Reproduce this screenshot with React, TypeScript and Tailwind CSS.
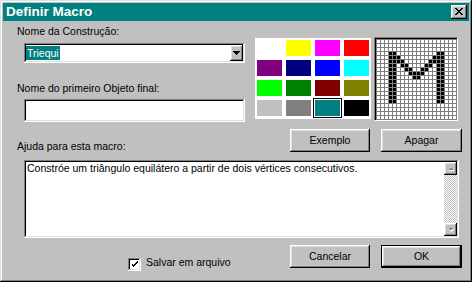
import React from "react";

const raised =
  "shadow-[inset_-1px_-1px_#000,inset_1px_1px_#fff,inset_-2px_-2px_#808080,inset_2px_2px_#dfdfdf]";
const sunken =
  "shadow-[inset_-1px_-1px_#fff,inset_1px_1px_#808080,inset_-2px_-2px_#dfdfdf,inset_2px_2px_#000]";

const palette = [
  "bg-white", "bg-[#ffff00]", "bg-[#ff00ff]", "bg-[#ff0000]",
  "bg-[#800080]", "bg-[#000080]", "bg-[#0000ff]", "bg-[#00ffff]",
  "bg-[#00ff00]", "bg-[#008000]", "bg-[#800000]", "bg-[#808000]",
  "bg-[#c0c0c0]", "bg-[#808080]", "bg-[#008080]", "bg-black",
];

// 20x20 bitmap of the macro icon
const glyph: number[][] = [
  [], [], [],
  [3, 4, 15, 16],
  [3, 4, 5, 14, 15, 16],
  [3, 4, 5, 6, 13, 14, 15, 16],
  [3, 4, 6, 7, 12, 13, 15, 16],
  [3, 4, 7, 8, 11, 12, 15, 16],
  [3, 4, 8, 9, 10, 11, 15, 16],
  [3, 4, 9, 10, 15, 16],
  [3, 4, 15, 16], [3, 4, 15, 16], [3, 4, 15, 16],
  [3, 4, 15, 16], [3, 4, 15, 16], [3, 4, 15, 16],
  [], [], [], [],
];

const closeX = [
  "XX....XX",
  ".XX..XX.",
  "..XXXX..",
  "...XX...",
  "..XXXX..",
  ".XX..XX.",
  "XX....XX",
];

function CloseButton() {
  return (
    <div className={`w-[16px] h-[14px] bg-[#c0c0c0] flex items-center justify-center ${raised}`}>
      <svg width="8" height="7" viewBox="0 0 8 7" shapeRendering="crispEdges" className="-mt-px -ml-px">
        {closeX.map((row, y) =>
          row.split("").map((c, x) =>
            c === "X" ? <rect key={`${x}-${y}`} x={x} y={y} width="1" height="1" fill="#000" /> : null
          )
        )}
      </svg>
    </div>
  );
}

function Button({ label, w, isDefault }: { label: string; w: string; isDefault?: boolean }) {
  if (isDefault) {
    return (
      <div className={`${w} h-[23px] border border-black`}>
        <div className={`w-full h-full flex items-center justify-center ${raised}`}>{label}</div>
      </div>
    );
  }
  return <div className={`${w} h-[23px] flex items-center justify-center ${raised}`}>{label}</div>;
}

function ScrollArrow({ up }: { up?: boolean }) {
  return (
    <div className={`w-[13px] h-[13px] bg-[#c0c0c0] flex items-center justify-center ${raised}`}>
      <svg width="6" height="4" viewBox="0 0 6 4" shapeRendering="crispEdges">
        {up ? (
          <>
            <polygon points="1,4 6,4 3.5,1" fill="#fff" />
            <polygon points="0,3 5,3 2.5,0.5" fill="#808080" />
          </>
        ) : (
          <>
            <polygon points="1,1 6,1 3.5,4" fill="#fff" />
            <polygon points="0,0 5,0 2.5,2.5" fill="#808080" />
          </>
        )}
      </svg>
    </div>
  );
}

export default function App() {
  return (
    <div
      className={`w-[472px] h-[282px] bg-[#c0c0c0] p-[3px] flex flex-col text-black text-[10.5px] leading-[13px] font-['Liberation_Sans',Arial,sans-serif] shadow-[inset_-1px_-1px_#000,inset_1px_1px_#dfdfdf,inset_-2px_-2px_#808080,inset_2px_2px_#fff]`}
    >
      {/* title bar */}
      <div className="h-[18px] bg-[#008080] flex items-center justify-between pl-[3px] pr-[2px]">
        <span className="text-white font-bold text-[13.5px] leading-[16px]">Definir Macro</span>
        <CloseButton />
      </div>

      {/* top section */}
      <div className="flex h-[101px]">
        <div className="ml-[14px] w-[228px] flex flex-col">
          <span className="mt-[4px]">Nome da Construção:</span>
          <div className={`mt-[5px] ml-[7px] w-[221px] h-[20px] bg-white p-[2px] flex ${sunken}`}>
            <div className="flex-1 flex items-center">
              <span className="bg-[#008080] text-white px-px h-[14px] leading-[14px]">Triequi</span>
            </div>
            <div className={`w-[13px] h-[16px] bg-[#c0c0c0] flex items-center justify-center ${raised}`}>
              <svg width="7" height="4" viewBox="0 0 7 4" shapeRendering="crispEdges">
                <polygon points="0,0 7,0 3.5,4" fill="#000" />
              </svg>
            </div>
          </div>
          <span className="mt-[19px]">Nome do primeiro Objeto final:</span>
          <div className={`mt-[4px] ml-[7px] w-[221px] h-[23px] bg-white ${sunken}`} />
        </div>

        {/* colour palette */}
        <div className="ml-[10px] mt-[17px] w-[116px] h-[81px] bg-white pt-[2px] pl-[2px] grid grid-cols-[repeat(4,25px)] grid-rows-[repeat(4,16px)] gap-[4px]">
          {palette.map((c, i) => (
            <div
              key={i}
              className={`${c} ${i === 14 ? "outline outline-1 outline-black outline-offset-[1px]" : ""}`}
            />
          ))}
        </div>

        {/* icon bitmap */}
        <div className="ml-[3px] mt-[16px] self-start border-t border-l border-[#808080] border-r border-b border-r-white border-b-white">
          <div className="border-t border-l border-black">
            <div className="grid grid-cols-[repeat(20,3px)] grid-rows-[repeat(20,3px)] gap-px p-px bg-[#808080]">
              {glyph.map((row, y) =>
                Array.from({ length: 20 }, (_, x) => (
                  <div key={`${x}-${y}`} className={row.includes(x) ? "bg-black" : "bg-white"} />
                ))
              )}
            </div>
          </div>
        </div>
      </div>

      {/* help label + buttons */}
      <div className="flex h-[31px] items-start">
        <span className="ml-[14px] mt-[18px]">Ajuda para esta macro:</span>
        <div className="ml-auto mr-[7px] mt-[7px] flex gap-[11px]">
          <Button label="Exemplo" w="w-[80px]" />
          <Button label="Apagar" w="w-[81px]" />
        </div>
      </div>

      {/* help text */}
      <div className={`mt-[7px] ml-[21px] w-[435px] h-[78px] bg-white p-[2px] flex ${sunken}`}>
        <div className="flex-1 pl-px">
          Constróe um triângulo equilátero a partir de dois vértices consecutivos.
        </div>
        <div className="w-[13px] flex flex-col">
          <ScrollArrow up />
          <div className="flex-1 bg-[repeating-conic-gradient(#c0c0c0_0%_25%,#fff_0%_50%)] bg-[length:2px_2px]" />
          <ScrollArrow />
        </div>
      </div>

      {/* bottom row */}
      <div className="flex items-start">
        <div className="ml-[125px] mt-[18px] flex items-start">
          <div className={`mt-[2px] w-[13px] h-[13px] bg-white flex items-center justify-center ${sunken}`}>
            <svg width="7" height="7" viewBox="0 0 7 7" shapeRendering="crispEdges">
              <path d="M0 2h1v3h1v1h1v-1h1v-1h1v-1h1v-1h1v-2h-1v1h-1v1h-1v1h-1v1h-1v-1h-1v-1z" fill="#000" />
            </svg>
          </div>
          <span className="ml-[5px]">Salvar em arquivo</span>
        </div>
        <div className="ml-auto mr-[7px] mt-[7px] flex gap-[11px]">
          <Button label="Cancelar" w="w-[80px]" />
          <Button label="OK" w="w-[81px]" isDefault />
        </div>
      </div>
    </div>
  );
}
